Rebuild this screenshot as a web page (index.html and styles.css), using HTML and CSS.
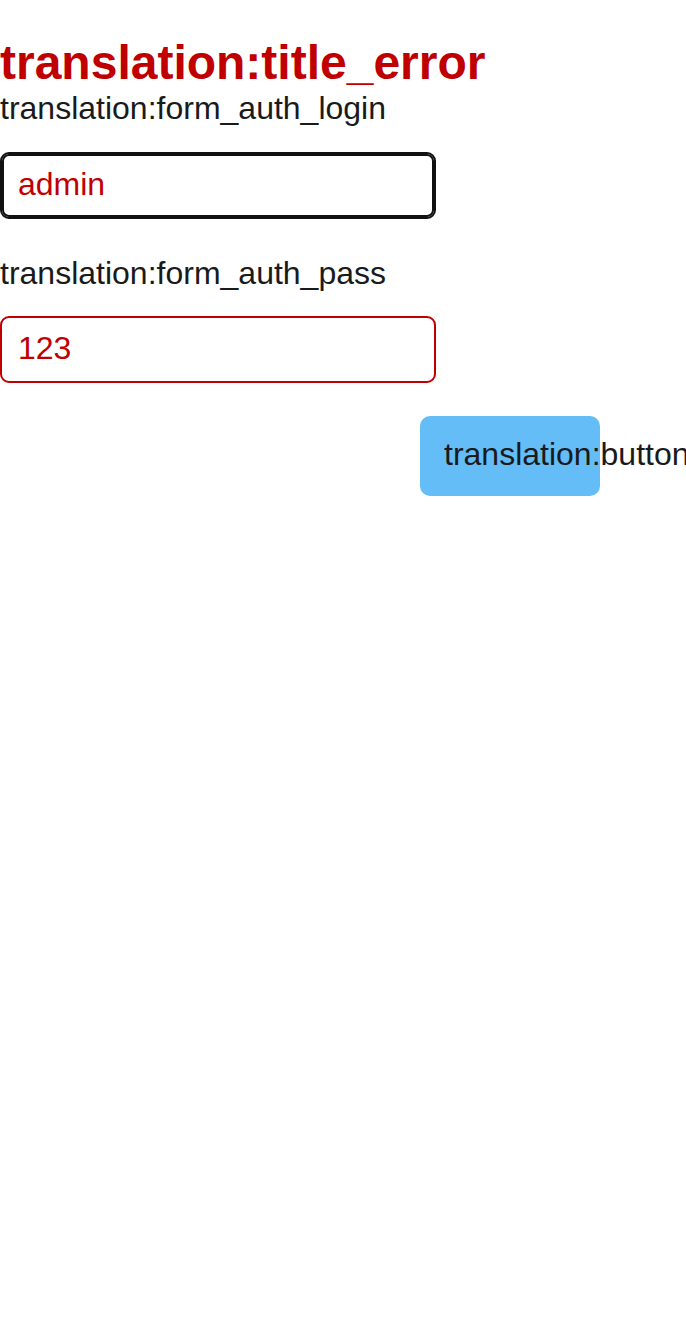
FILE: index.html
```html
<!DOCTYPE html>
<html lang="en">
<head>
<meta charset="utf-8">
<title>Auth</title>
<link rel="stylesheet" href="styles.css">
</head>
<body>
<main class="page">
  <h1 class="title">translation:title_error</h1>
  <form class="form">
    <div class="field">
      <label class="label" for="login">translation:form_auth_login</label>
      <input class="input input--focused" id="login" type="text" value="admin">
    </div>
    <div class="field">
      <label class="label" for="pass">translation:form_auth_pass</label>
      <input class="input" id="pass" type="text" value="123">
    </div>
    <div class="actions">
      <button class="button" type="button">translation:button_auth_submit</button>
    </div>
  </form>
</main>
</body>
</html>
```

FILE: styles.css
```css
html, body {
  margin: 0;
  padding: 0;
  background: #ffffff;
  overflow-x: hidden;
}

body {
  font-family: "Liberation Sans", Arial, sans-serif;
  color: #1a1a1a;
}

.page {
  padding-top: 35px;
}

.title {
  margin: 0;
  font-size: 48px;
  font-weight: 700;
  line-height: 55px;
  color: #c00000;
}

.form {
  width: 600px;
  display: flex;
  flex-direction: column;
}

.field {
  display: flex;
  flex-direction: column;
  margin-bottom: 36px;
}

.field + .field {
  margin-bottom: 32px;
}

.label {
  font-size: 32px;
  line-height: 37px;
  margin-bottom: 25px;
  color: #1a1a1a;
}

.field + .field .label {
  margin-bottom: 24px;
}

.field + .field .input {
  margin-bottom: 1px;
}

.input {
  box-sizing: border-box;
  width: 436px;
  height: 67px;
  margin: 0;
  padding: 0 16px 3px;
  font-family: "Liberation Sans", Arial, sans-serif;
  font-size: 32px;
  color: #c00000;
  background: #ffffff;
  border: 2px solid #c00000;
  border-radius: 9px;
  outline: none;
}

.input--focused {
  border-color: #111111;
  box-shadow: inset 0 0 0 2px #111111;
}

.actions {
  display: flex;
  justify-content: flex-end;
}

.button {
  box-sizing: border-box;
  width: 180px;
  height: 80px;
  margin: 0;
  padding: 0 0 4px 24px;
  border: none;
  border-radius: 10px;
  background: #64bdf6;
  color: #1a1a1a;
  font-family: "Liberation Sans", Arial, sans-serif;
  font-size: 32px;
  text-align: left;
  white-space: nowrap;
  overflow: visible;
}
```
